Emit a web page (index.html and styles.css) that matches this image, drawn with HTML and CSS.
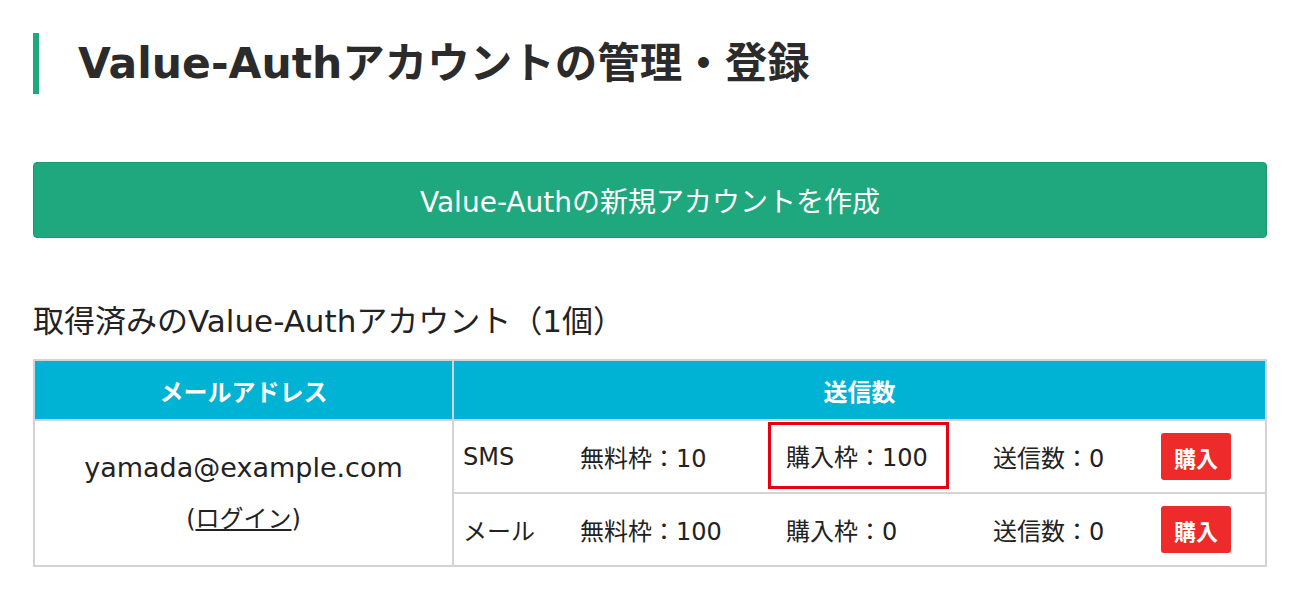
FILE: index.html
```html
<!DOCTYPE html>
<html lang="ja">
<head>
    <meta charset="UTF-8">
    <meta name="viewport" content="width=device-width, initial-scale=1.0">
    <title>Value-Authアカウントの管理・登録</title>
    <link rel="stylesheet" href="styles.css">
</head>
<body>
    <div class="page">
        <h1 class="page-title">Value-Authアカウントの管理・登録</h1>

        <a class="create-btn" href="#">Value-Authの新規アカウントを作成</a>

        <h2 class="section-title">取得済みのValue-Authアカウント（1個）</h2>

        <table class="accounts">
            <colgroup>
                <col class="col-mail">
                <col class="col-type">
                <col class="col-free">
                <col class="col-buy">
                <col class="col-sent">
                <col class="col-btn">
            </colgroup>
            <thead>
                <tr>
                    <th>メールアドレス</th>
                    <th colspan="5">送信数</th>
                </tr>
            </thead>
            <tbody>
                <tr>
                    <td rowspan="2" class="mail">
                        <div class="address">yamada@example.com</div>
                        <div class="login">(<a href="#">ログイン</a>)</div>
                    </td>
                    <td class="type">SMS</td>
                    <td>無料枠：10</td>
                    <td class="buy"><div class="slot highlight">購入枠：100</div></td>
                    <td>送信数：0</td>
                    <td class="action"><button class="buy-btn">購入</button></td>
                </tr>
                <tr>
                    <td class="type">メール</td>
                    <td>無料枠：100</td>
                    <td class="buy"><div class="slot">購入枠：0</div></td>
                    <td>送信数：0</td>
                    <td class="action"><button class="buy-btn">購入</button></td>
                </tr>
            </tbody>
        </table>
    </div>
</body>
</html>
```

FILE: styles.css
```css
body {
    margin: 0;
    font-family: "DejaVu Sans", "Noto Sans CJK JP", sans-serif;
    color: #222;
    background-color: #fff;
}
.page {
    padding: 33px 33px 0 33px;
}
.page-title {
    margin: 0;
    height: 61px;
    line-height: 61px;
    border-left: 6px solid #1fa77d;
    padding-left: 39px;
    font-size: 42.5px;
    font-weight: bold;
    color: #2b2b2b;
}
.create-btn {
    display: flex;
    justify-content: center;
    align-items: center;
    margin-top: 68px;
    height: 74px;
    border: 1px solid #189a71;
    border-radius: 4px;
    background-color: #1fa77d;
    color: #fff;
    font-size: 28px;
    text-decoration: none;
}
.section-title {
    margin: 63px 0 0 0;
    height: 40px;
    line-height: 40px;
    font-size: 31px;
    font-weight: normal;
    color: #222;
}
.accounts {
    margin-top: 18px;
    width: 100%;
    border-collapse: collapse;
    table-layout: fixed;
    border: 2px solid #d3d3d3;
    font-size: 24px;
}
.col-mail { width: 419px; }
.col-type { width: 127px; }
.col-free { width: 188px; }
.col-buy { width: 225px; }
.col-sent { width: 168px; }
.accounts th {
    height: 58px;
    padding: 0;
    background-color: #00b2d3;
    color: #fff;
    font-weight: bold;
    font-size: 24px;
    border: 2px solid #d3d3d3;
}
.accounts td {
    height: 71px;
    padding: 0;
    border-top: 2px solid #d3d3d3;
    border-bottom: 2px solid #d3d3d3;
    white-space: nowrap;
}
.accounts td.mail {
    text-align: center;
    border-right: 2px solid #d3d3d3;
}
.address {
    font-size: 27px;
    line-height: 34px;
    margin-top: -2px;
}
.login {
    margin-top: 14px;
    font-size: 24px;
}
.login a {
    color: #222;
}
.accounts td.type {
    padding-left: 9px;
}
.slot {
    display: flex;
    align-items: center;
    width: 160px;
    height: 61px;
    padding-left: 15px;
    border: 3px solid transparent;
}
.slot.highlight {
    border-color: #e60012;
    margin-top: -2px;
}
.buy-btn {
    width: 70px;
    height: 47px;
    padding: 0;
    border: none;
    border-radius: 3px;
    background-color: #ee2a2a;
    color: #fff;
    font-family: inherit;
    font-size: 22px;
    font-weight: bold;
    cursor: pointer;
}
```
